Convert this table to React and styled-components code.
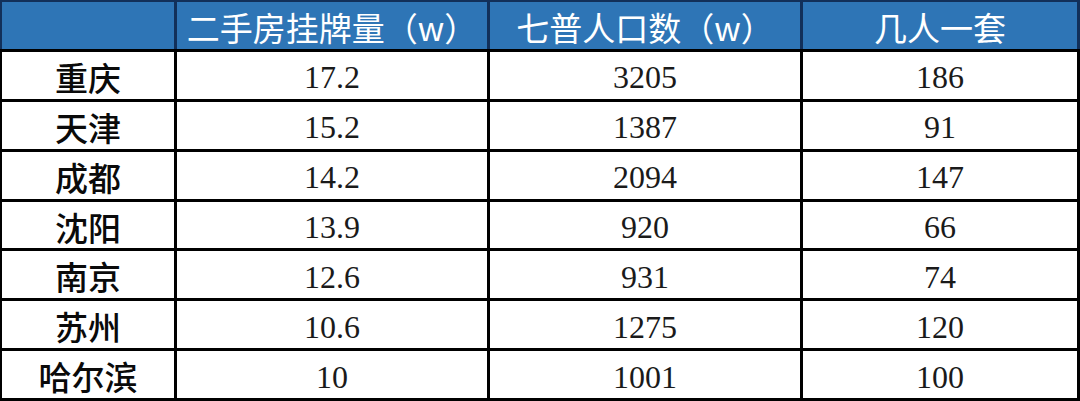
import React from "react";
import styled, { createGlobalStyle } from "styled-components";

const Global = createGlobalStyle`
  html, body { margin: 0; padding: 0; background: #fff; }
  body { width: 1080px; height: 401px; overflow: hidden; }
`;

const COLS = "172px 310px 310px 1fr";

const Table = styled.div`
  width: 1080px;
  height: 401px;
  box-sizing: border-box;
  display: flex;
  flex-direction: column;
  gap: 3px;
  padding-bottom: 3px;
  background: #000;
`;

const HeaderRow = styled.div`
  display: grid;
  grid-template-columns: ${COLS};
  gap: 3px;
  padding: 2px 3px 0 2px;
  height: 49px;
  box-sizing: border-box;
  background: #12305a;
`;

const Row = styled.div`
  flex: 1;
  display: grid;
  grid-template-columns: ${COLS};
  gap: 3px;
  padding: 0 3px 0 2px;
  background: #000;
`;

const HeaderCell = styled.div`
  background: #2e75b6;
  color: #fff;
  display: flex;
  align-items: center;
  justify-content: center;
  padding-top: 4px;
  box-sizing: border-box;
  font-family: "Noto Sans CJK SC", "Noto Sans", sans-serif;
  font-size: 33px;
  font-weight: 400;
  line-height: 1;
  white-space: nowrap;
`;

const Cell = styled.div`
  background: #fff;
  display: flex;
  align-items: center;
  justify-content: center;
  padding-top: 4px;
  box-sizing: border-box;
  line-height: 1;
  white-space: nowrap;
`;

const CityCell = styled(Cell)`
  font-family: "Noto Sans CJK SC", "Noto Sans", sans-serif;
  font-size: 33px;
  font-weight: 500;
  color: #0a0a0a;
`;

const NumCell = styled(Cell)`
  font-family: "Liberation Serif", "Times New Roman", serif;
  font-size: 32px;
  font-weight: 400;
  color: #1a1a1a;
`;

const headers = ["", "二手房挂牌量（w）", "七普人口数（w）", "几人一套"];

const rows = [
  ["重庆", "17.2", "3205", "186"],
  ["天津", "15.2", "1387", "91"],
  ["成都", "14.2", "2094", "147"],
  ["沈阳", "13.9", "920", "66"],
  ["南京", "12.6", "931", "74"],
  ["苏州", "10.6", "1275", "120"],
  ["哈尔滨", "10", "1001", "100"],
];

export default function App() {
  return (
    <>
      <Global />
      <Table>
        <HeaderRow>
          {headers.map((h, i) => (
            <HeaderCell key={i}>{h}</HeaderCell>
          ))}
        </HeaderRow>
        {rows.map(([city, ...nums]) => (
          <Row key={city}>
            <CityCell>{city}</CityCell>
            {nums.map((v, i) => (
              <NumCell key={i}>{v}</NumCell>
            ))}
          </Row>
        ))}
      </Table>
    </>
  );
}
